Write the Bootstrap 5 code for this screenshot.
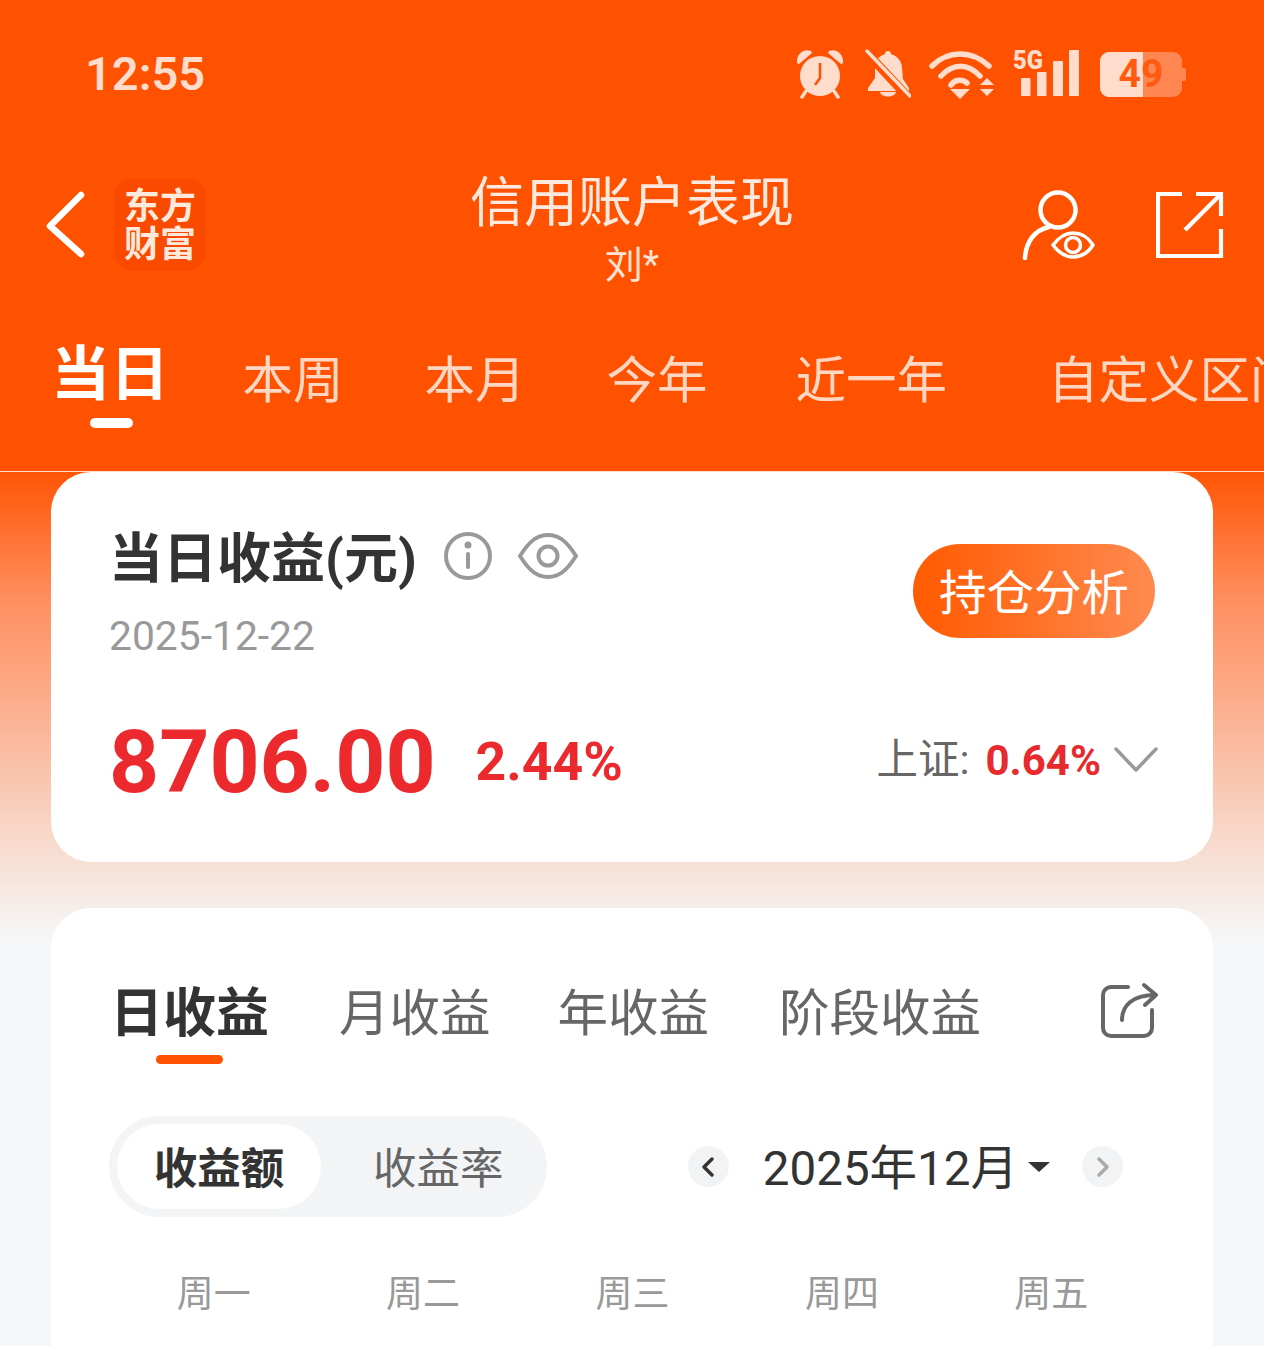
<!DOCTYPE html>
<html lang="zh-CN">
<head>
    <meta charset="UTF-8">
    <meta name="viewport" content="width=device-width, initial-scale=1.0">
    <title>信用账户表现</title>
    <link href="https://cdn.jsdelivr.net/npm/bootstrap@5.3.0/dist/css/bootstrap.min.css" rel="stylesheet">
    <style>
        html, body {
            height: 1346px;
            overflow: hidden;
        }
        body {
            background-color: #f6f7f9;
            font-family: Roboto, "Noto Sans CJK SC", sans-serif;
            color: #333;
        }
        .top-head {
            height: 472px;
            background-color: #ff5200;
            border-bottom: 1px solid #ffe0c8;
            color: #fff;
        }
        .status-row {
            height: 148px;
            padding: 0 78px 0 85px;
            color: #ffdccb;
        }
        .clock-text {
            font-size: 47px;
            font-weight: 600;
            line-height: 1;
            margin-bottom: 2px;
        }
        .status-icons {
            gap: 18px;
        }
        .alarm-icon {
            margin-right: 3px;
        }
        .signal-icon {
            margin-right: 2px;
        }
        .batt-box {
            position: relative;
            width: 86px;
            height: 45px;
        }
        .batt-num {
            position: absolute;
            inset: 0 4px 0 0;
            text-align: center;
            font-size: 39px;
            font-weight: 700;
            line-height: 45px;
            color: #ff5a10;
        }
        .title-row {
            height: 168px;
            padding: 0 40px 0 44px;
            position: relative;
        }
        .title-left {
            margin-top: 31px;
        }
        .title-right {
            margin-top: 42px;
            gap: 61px;
        }
        .title-mid {
            position: absolute;
            left: 0;
            right: 0;
            top: 21px;
            text-align: center;
        }
        .title-main {
            font-size: 54px;
            line-height: 70px;
            color: #ffe9de;
        }
        .title-sub {
            font-size: 38px;
            line-height: 52px;
            color: #ffe3d5;
        }
        .logo-box {
            width: 92px;
            height: 92px;
            padding-top: 2px;
            background-color: #f94a00;
            border-radius: 18px;
            margin-left: 26px;
            color: #ffe9dc;
            font-size: 36px;
            font-weight: 700;
            line-height: 38px;
            text-align: center;
        }
        .head-tabs {
            padding-left: 51px;
            height: 155px;
            white-space: nowrap;
            overflow: hidden;
        }
        .head-tab {
            font-size: 50.5px;
            line-height: 66px;
            color: #ffd7c3;
            margin-right: 81px;
            margin-top: 32px;
        }
        .head-tab-on {
            position: relative;
            font-size: 59px;
            font-weight: 700;
            color: #fff;
            margin-right: 73.5px;
            margin-top: 26px;
        }
        .head-tab-on::after {
            content: "";
            position: absolute;
            left: 39px;
            bottom: -20px;
            width: 43px;
            height: 10px;
            border-radius: 5px;
            background-color: #fff;
        }
        .head-tab-year {
            margin-right: 88px;
        }
        .head-tab-wide {
            margin-right: 101px;
        }
        .main-part {
            background: linear-gradient(#ff5505 0, #ff8f5f 128px, #fbb598 255px, #f8d5c5 355px, #f5f3f2 455px, #f6f7f9 470px);
            padding: 0 51px;
            height: 874px;
            overflow: hidden;
        }
        .panel-card {
            border: 0;
            border-radius: 40px;
            background-color: #fff;
        }
        .panel-one {
            height: 390px;
            padding: 0 58px 0 60px;
            margin-bottom: 46px;
        }
        .profit-head {
            padding-top: 55px;
        }
        .profit-title {
            font-size: 54px;
            font-weight: 700;
            line-height: 66px;
            color: #333;
            margin-left: -2px;
        }
        .head-icon {
            margin-bottom: 8px;
        }
        .icon-info {
            margin-left: 27px;
        }
        .icon-eye {
            margin-left: 26px;
        }
        .profit-date {
            font-size: 40.8px;
            line-height: 50px;
            color: #999;
            margin-left: -2px;
            margin-top: 18px;
        }
        .hold-btn {
            width: 242px;
            height: 94px;
            border: 0;
            border-radius: 47px;
            padding: 0;
            margin-top: 17px;
            font-size: 47.5px;
            line-height: 100px;
            color: #fff;
            background: linear-gradient(90deg, #ff5a00, #ff8a50);
        }
        .profit-row {
            margin-top: 51px;
        }
        .profit-num {
            font-size: 87.5px;
            font-weight: 700;
            line-height: 100px;
            color: #ec2a2e;
            margin-left: -2px;
        }
        .profit-rate {
            font-size: 53.5px;
            font-weight: 700;
            color: #ec2a2e;
            margin-left: 40px;
        }
        .index-box {
            margin-bottom: 4px;
        }
        .index-lab {
            font-size: 41.5px;
            color: #666;
        }
        .index-val {
            font-size: 42px;
            font-weight: 700;
            color: #e62a2e;
            margin: 0 13px 0 16px;
        }
        .index-arrow {
            margin-right: -3px;
        }
        .panel-two {
            height: 520px;
            flex-shrink: 0;
            padding: 0 57px 0 58px;
        }
        .sub-tabs {
            padding-top: 72px;
            height: 208px;
        }
        .sub-tab {
            font-size: 50.5px;
            line-height: 68px;
            color: #666;
        }
        .sub-tab-on {
            position: relative;
            font-size: 53px;
            font-weight: 700;
            color: #333;
            margin-left: 1px;
            margin-right: 70px;
        }
        .sub-tab-on::after {
            content: "";
            position: absolute;
            left: 46px;
            bottom: -16px;
            width: 67px;
            height: 9px;
            border-radius: 5px;
            background-color: #ff5200;
        }
        .sub-tab-gap {
            margin-right: 67px;
        }
        .sub-tab-gap2 {
            margin-right: 70px;
        }
        .share-icon {
            margin-top: 2px;
            margin-right: -2px;
        }
        .type-switch {
            width: 438px;
            height: 101px;
            border-radius: 51px;
            background-color: #f3f4f6;
            padding: 8px;
            font-size: 43.5px;
            line-height: 85px;
            color: #666;
        }
        .type-on {
            width: 204px;
            height: 85px;
            padding-top: 3px;
            border-radius: 43px;
            background-color: #fff;
            font-weight: 700;
            color: #333;
            text-align: center;
        }
        .type-off {
            margin-left: 52px;
            padding-top: 5px;
        }
        .month-box {
            margin-right: 33px;
        }
        .month-arrow {
            width: 41px;
            height: 41px;
            border-radius: 50%;
            background-color: #f2f3f5;
        }
        .month-text {
            font-size: 47.5px;
            line-height: 62px;
            padding-top: 4px;
            color: #333;
            margin: 0 10px 0 34px;
        }
        .month-caret {
            width: 0;
            height: 0;
            border-left: 11px solid transparent;
            border-right: 11px solid transparent;
            border-top: 10px solid #333;
            margin-right: 32px;
        }
        .week-row {
            margin-top: 50px;
            font-size: 37px;
            color: #999;
            text-align: center;
        }
    </style>
</head>
<body>
    <div class="top-head">
        <!-- status bar -->
        <div class="status-row d-flex align-items-center justify-content-between">
            <div class="clock-text">12:55</div>
            <div class="status-icons d-flex align-items-center">
                <svg class="alarm-icon" width="48" height="50" viewBox="0 0 48 50" fill="#ffdccb">
                    <circle cx="24" cy="27" r="20"/>
                    <path d="M1 14C0 5 8 -1 15 2L16 4 3 15ZM47 14C48 5 40 -1 33 2L32 4 45 15Z"/>
                    <path d="M10 42l-4 6M38 42l4 6" stroke="#ffdccb" stroke-width="3.5" stroke-linecap="round"/>
                    <path d="M24 14V29L19 36" stroke="#ff5200" stroke-width="2.5" fill="none"/>
                </svg>
                <svg width="46" height="50" viewBox="0 0 46 50" fill="#ffdccb">
                    <path d="M20 5a3 3 0 0 1 6 0c7 2 11 8 11 14l1 11 6 9v3H3v-3l7-10V16c1-6 5-9 10-11ZM15 43h16c-1 6-15 6-16 0Z"/>
                    <path d="M2 4L44 49" stroke="#ff5200" stroke-width="9"/>
                    <path d="M2 2L45 47" stroke="#ffdccb" stroke-width="3.5" stroke-linecap="round"/>
                </svg>
                <svg width="66" height="50" viewBox="0 0 66 50" fill="none" stroke="#ffdccb" stroke-width="5.5" stroke-linecap="round">
                    <path d="M3 17C19 1 43 1 60 17"/>
                    <path d="M12 27C24 14 39 14 51 27"/>
                    <path d="M22 36C26 30 34 30 38 34"/>
                    <path d="M21 40H41L31 50Z" fill="#ffdccb" stroke="none"/>
                    <path d="M58 29l7 7H51ZM51 40H65l-7 7Z" fill="#ffdccb" stroke="none"/>
                </svg>
                <svg class="signal-icon" width="67" height="50" viewBox="0 0 67 50" fill="#ffdccb">
                    <text x="0" y="20" font-family="Roboto, sans-serif" font-weight="900" font-size="26" textLength="30" lengthAdjust="spacingAndGlyphs">5G</text>
                    <rect x="8" y="29" width="9.5" height="18" rx="1"/>
                    <rect x="24" y="23" width="9.5" height="24" rx="1"/>
                    <rect x="40" y="12" width="10" height="35" rx="1"/>
                    <rect x="56" y="1" width="10" height="46" rx="1"/>
                </svg>
                <div class="batt-box">
                    <svg width="86" height="45" viewBox="0 0 86 45" class="d-block">
                        <rect x="0" y="0" width="82" height="45" rx="9" fill="#ff8650"/>
                        <path d="M9 0H43V45H9A9 9 0 0 1 0 36V9A9 9 0 0 1 9 0Z" fill="#ffdccb"/>
                        <path d="M82 16h2a2 2 0 0 1 2 2v9a2 2 0 0 1-2 2h-2Z" fill="#ff8650"/>
                    </svg>
                    <div class="batt-num">49</div>
                </div>
            </div>
        </div>
        <!-- title bar -->
        <div class="title-row d-flex align-items-start justify-content-between">
            <div class="title-left d-flex align-items-center">
                <svg width="44" height="70" viewBox="0 0 44 70" fill="none" stroke="#fff" stroke-width="6.5" stroke-linecap="round" stroke-linejoin="round">
                    <path d="M37 5L6 36 37 64"/>
                </svg>
                <div class="logo-box d-flex align-items-center justify-content-center">东方<br>财富</div>
            </div>
            <div class="title-mid">
                <div class="title-main">信用账户表现</div>
                <div class="title-sub">刘*</div>
            </div>
            <div class="title-right d-flex align-items-center">
                <svg width="74" height="70" viewBox="0 0 74 70" fill="none" stroke="#fff" stroke-width="4.5" stroke-linecap="round">
                    <circle cx="37" cy="20" r="17.5"/>
                    <path d="M28 37C14 40 5 51 4 68"/>
                    <path d="M32 55C38 47 44 43 52 43 60 43 67 47 72 55 67 63 60 67 52 67 44 67 38 63 32 55Z" stroke-width="3.5"/>
                    <circle cx="52" cy="55" r="7.5" stroke-width="3.5"/>
                </svg>
                <svg width="68" height="66" viewBox="0 0 68 66" fill="none" stroke="#fff" stroke-width="4.2">
                    <path d="M26 2H2V64H65V37"/>
                    <path d="M40 2H65V24"/>
                    <path d="M65 2L29 38"/>
                </svg>
            </div>
        </div>
        <!-- period tabs -->
        <div class="head-tabs d-flex align-items-start">
            <div class="head-tab head-tab-on">当日</div>
            <div class="head-tab">本周</div>
            <div class="head-tab">本月</div>
            <div class="head-tab head-tab-year">今年</div>
            <div class="head-tab head-tab-wide">近一年</div>
            <div class="head-tab">自定义区间</div>
        </div>
    </div>

    <div class="main-part">
        <div class="card panel-card panel-one">
            <div class="d-flex justify-content-between profit-head">
                <div>
                    <div class="d-flex align-items-center">
                        <div class="profit-title">当日收益(元)</div>
                        <svg class="head-icon icon-info" width="48" height="48" viewBox="0 0 48 48" fill="none" stroke="#999" stroke-width="4" stroke-linecap="round">
                            <circle cx="24" cy="24" r="22"/>
                            <path d="M24 22V35"/>
                            <circle cx="24" cy="13" r="1.5" fill="#999"/>
                        </svg>
                        <svg class="head-icon icon-eye" width="60" height="48" viewBox="0 0 60 48" fill="none" stroke="#999" stroke-width="4">
                            <path d="M2 24C12 8 20 3 30 3 40 3 48 8 58 24 48 40 40 45 30 45 20 45 12 40 2 24Z"/>
                            <circle cx="30" cy="24" r="9.5"/>
                        </svg>
                    </div>
                    <div class="profit-date">2025-12-22</div>
                </div>
                <button class="hold-btn" type="button">持仓分析</button>
            </div>
            <div class="profit-row d-flex align-items-center justify-content-between">
                <div class="d-flex align-items-center">
                    <div class="profit-num">8706.00</div>
                    <div class="profit-rate">2.44%</div>
                </div>
                <div class="index-box d-flex align-items-center">
                    <span class="index-lab">上证:</span>
                    <span class="index-val">0.64%</span>
                    <svg class="index-arrow" width="44" height="26" viewBox="0 0 44 26" fill="none" stroke="#999" stroke-width="3.5" stroke-linecap="round" stroke-linejoin="round">
                        <path d="M2 2L22 23 42 2"/>
                    </svg>
                </div>
            </div>
        </div>

        <div class="card panel-card panel-two">
            <div class="sub-tabs d-flex align-items-start">
                <div class="sub-tab sub-tab-on">日收益</div>
                <div class="sub-tab sub-tab-gap">月收益</div>
                <div class="sub-tab sub-tab-gap2">年收益</div>
                <div class="sub-tab">阶段收益</div>
                <svg class="share-icon ms-auto" width="58" height="58" viewBox="0 0 58 58" fill="none" stroke="#666" stroke-width="4" stroke-linecap="round" stroke-linejoin="round">
                    <path d="M28 5H11A8 8 0 0 0 3 13V46A8 8 0 0 0 11 54H44A8 8 0 0 0 52 46V28"/>
                    <path d="M22 38C22 24 32 13 55 13"/>
                    <path d="M44 3L56 13 45 23"/>
                </svg>
            </div>
            <div class="d-flex align-items-center justify-content-between">
                <div class="type-switch d-flex align-items-center">
                    <div class="type-on">收益额</div>
                    <div class="type-off">收益率</div>
                </div>
                <div class="month-box d-flex align-items-center">
                    <div class="month-arrow d-flex align-items-center justify-content-center">
                        <svg width="14" height="22" viewBox="0 0 14 22" fill="none" stroke="#333" stroke-width="3.5" stroke-linecap="round" stroke-linejoin="round"><path d="M11 3L3 11 11 19"/></svg>
                    </div>
                    <div class="month-text">2025年12月</div>
                    <div class="month-caret"></div>
                    <div class="month-arrow d-flex align-items-center justify-content-center">
                        <svg width="14" height="22" viewBox="0 0 14 22" fill="none" stroke="#aaa" stroke-width="3.5" stroke-linecap="round" stroke-linejoin="round"><path d="M3 3L11 11 3 19"/></svg>
                    </div>
                </div>
            </div>
            <div class="week-row d-flex">
                <div class="flex-fill w-100">周一</div>
                <div class="flex-fill w-100">周二</div>
                <div class="flex-fill w-100">周三</div>
                <div class="flex-fill w-100">周四</div>
                <div class="flex-fill w-100">周五</div>
            </div>
        </div>
    </div>

    <script src="https://cdn.jsdelivr.net/npm/bootstrap@5.3.0/dist/js/bootstrap.bundle.min.js"></script>
</body>
</html>
